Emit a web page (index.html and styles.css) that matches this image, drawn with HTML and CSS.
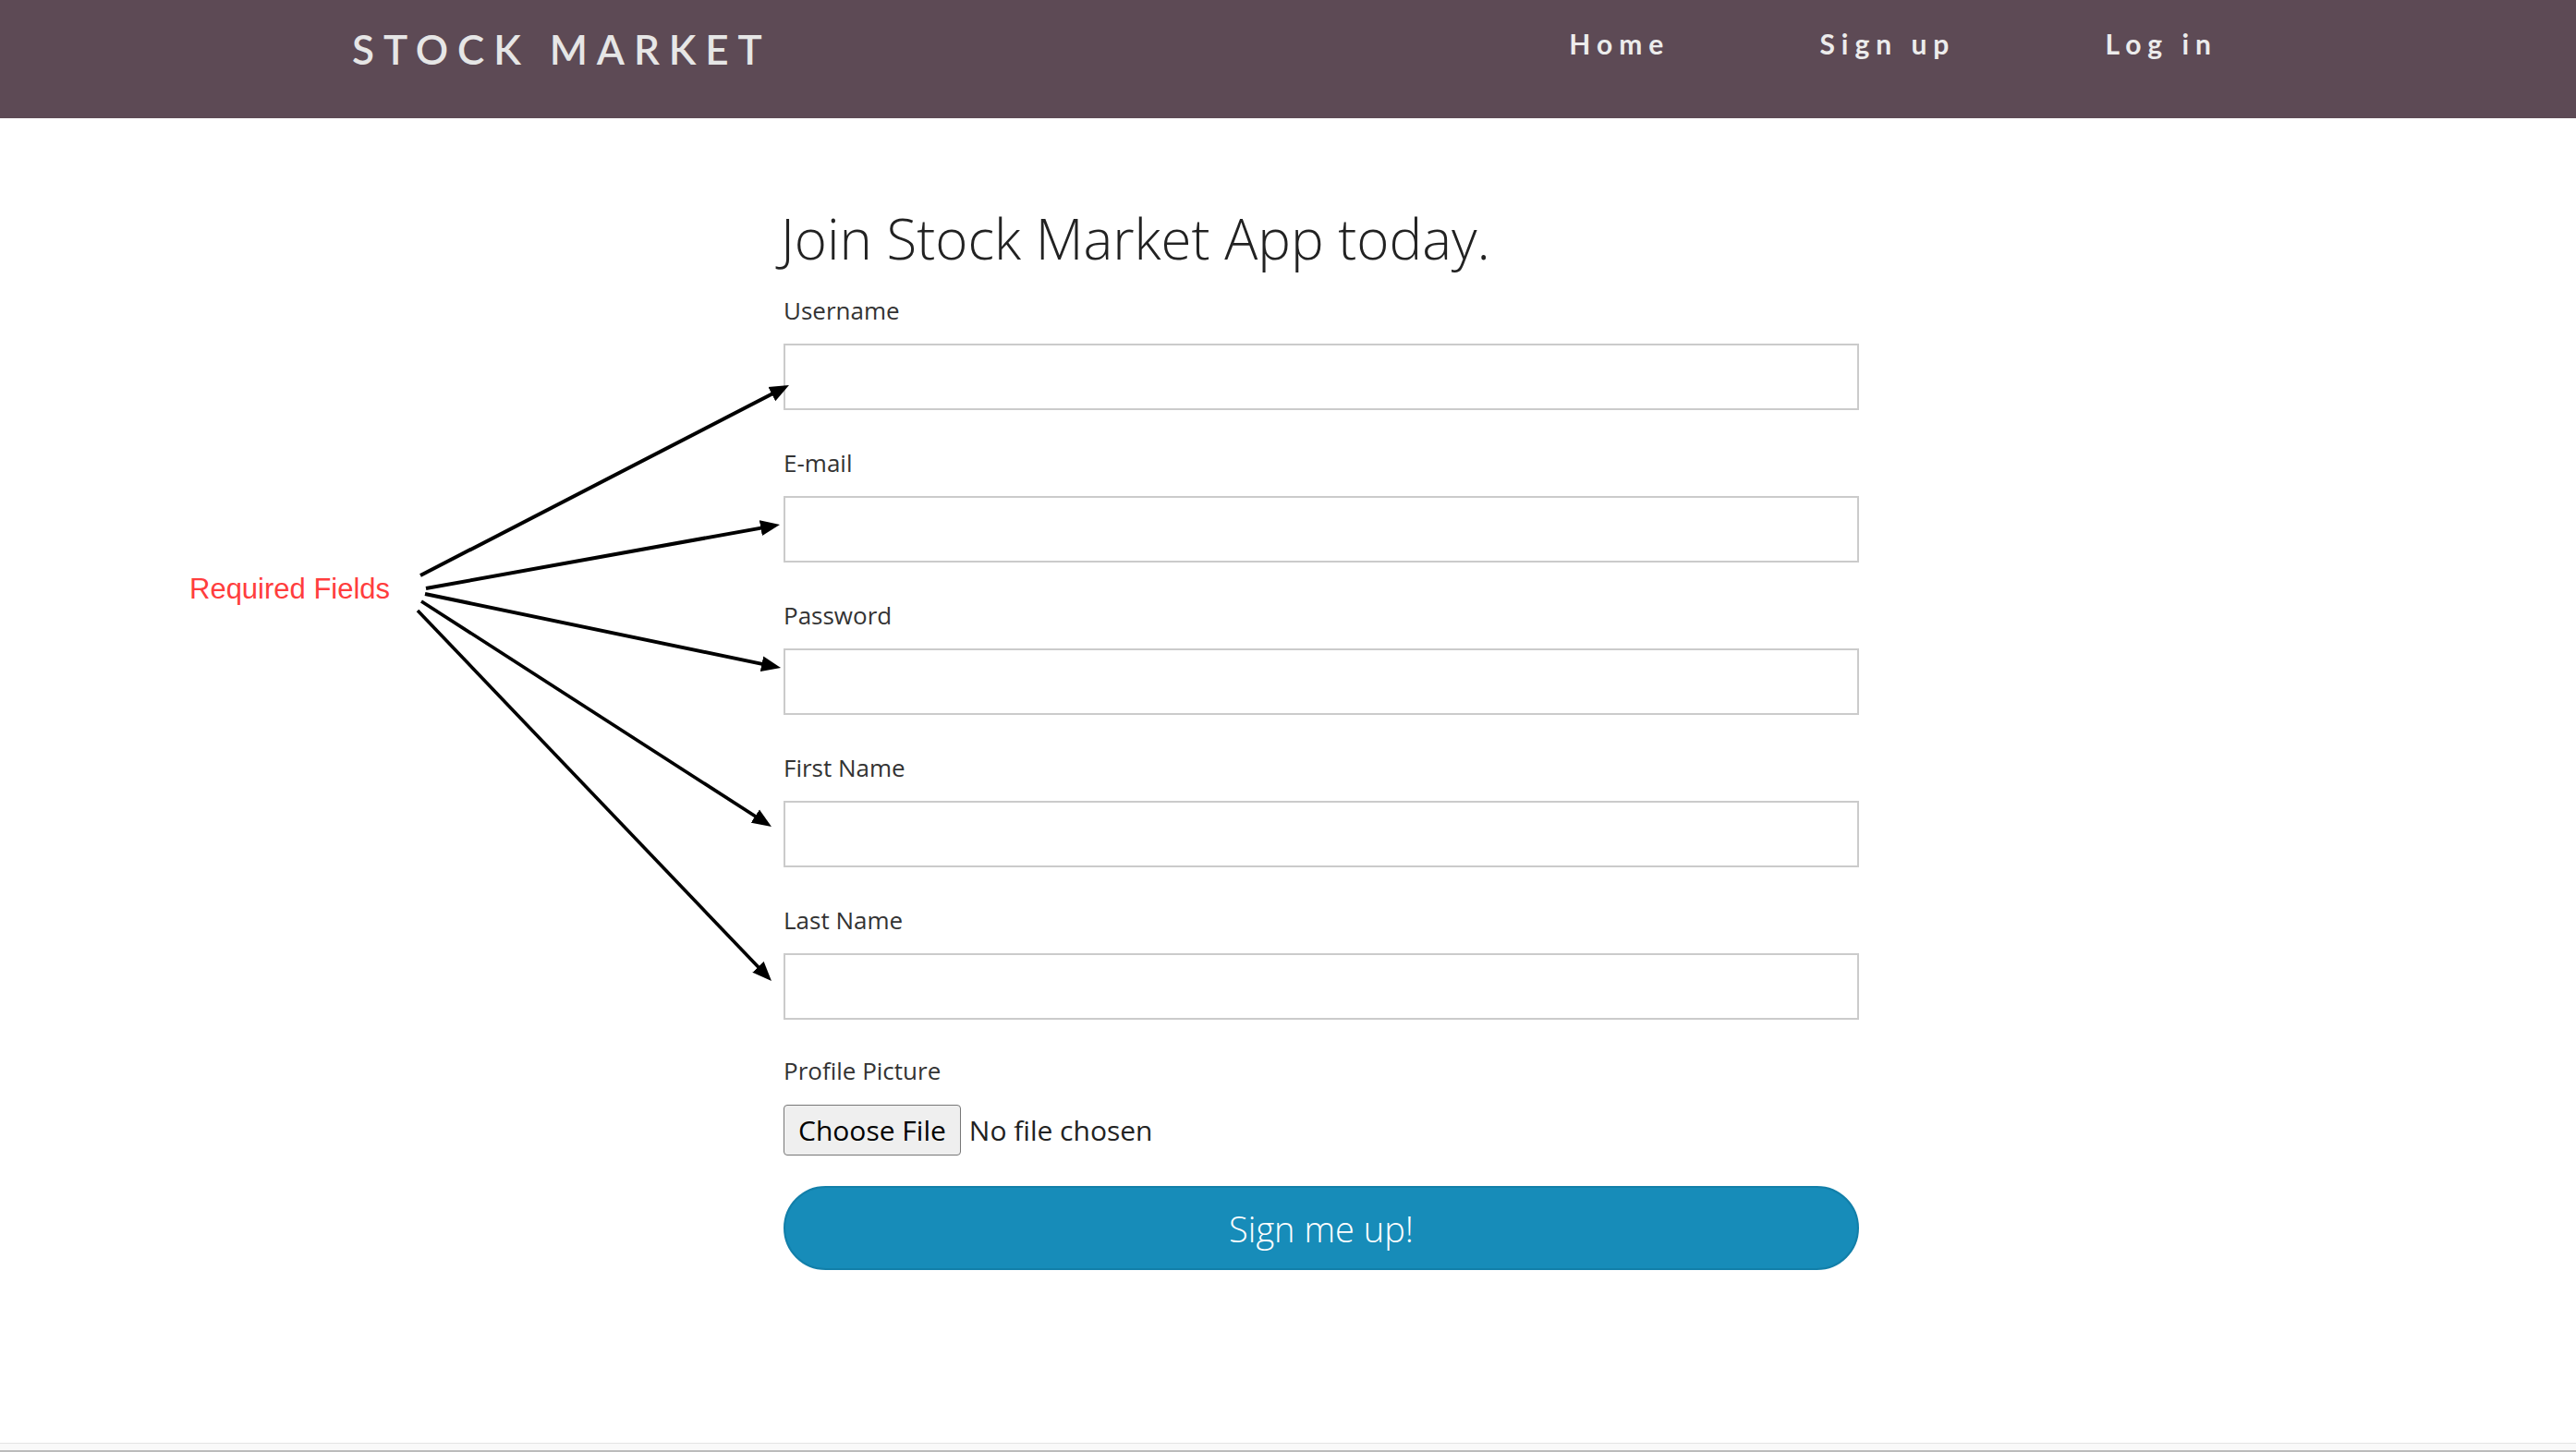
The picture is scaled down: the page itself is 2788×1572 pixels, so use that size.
FILE: index.html
```html
<!DOCTYPE html>
<html lang="en">
<head>
<meta charset="utf-8">
<title>Stock Market - Sign up</title>
<link rel="stylesheet" href="styles.css">
</head>
<body>
<header class="topbar">
  <div class="brand">STOCK MARKET</div>
  <nav class="nav">
    <a class="nav-link" href="#">Home</a>
    <a class="nav-link" href="#">Sign up</a>
    <a class="nav-link" href="#">Log in</a>
  </nav>
</header>

<main class="page">
  <form class="signup">
    <h1 class="title">Join Stock Market App today.</h1>
    <div class="field">
      <label class="label">Username</label>
      <input class="input" type="text">
    </div>
    <div class="field">
      <label class="label">E-mail</label>
      <input class="input" type="text">
    </div>
    <div class="field">
      <label class="label">Password</label>
      <input class="input" type="password">
    </div>
    <div class="field">
      <label class="label">First Name</label>
      <input class="input" type="text">
    </div>
    <div class="field">
      <label class="label">Last Name</label>
      <input class="input" type="text">
    </div>
    <div class="field field-file">
      <label class="label label-file">Profile Picture</label>
      <div class="file-row">
        <button type="button" class="file-btn">Choose File</button>
        <span class="file-none">No file chosen</span>
      </div>
    </div>
    <button type="button" class="submit">Sign me up!</button>
  </form>
</main>

<footer class="bottom-strip"></footer>

<div class="annotation-text">Required Fields</div>
<svg class="annotation" width="2788" height="1572" viewBox="0 0 2788 1572" xmlns="http://www.w3.org/2000/svg">
  <defs>
    <marker id="ah" markerUnits="userSpaceOnUse" markerWidth="22" markerHeight="18" refX="9" refY="9" orient="auto">
      <path d="M0,0.5 L21,9 L0,17.5 z" fill="#000"/>
    </marker>
  </defs>
  <g stroke="#000" stroke-width="4" fill="none" marker-end="url(#ah)">
    <line x1="455" y1="623" x2="843.3" y2="422.5"/>
    <line x1="461" y1="637" x2="832.2" y2="570.1"/>
    <line x1="460" y1="643" x2="833.3" y2="720.6"/>
    <line x1="456" y1="651" x2="824.9" y2="888.5" stroke-width="3.6"/>
    <line x1="452" y1="661" x2="826.7" y2="1053.3" stroke-width="3.6"/>
  </g>
</svg>
</body>
</html>
```

FILE: styles.css
```css
html, body {
  margin: 0;
  padding: 0;
}
body {
  position: relative;
  width: 2788px;
  min-height: 1572px;
  display: flex;
  flex-direction: column;
  background: #fff;
  font-family: "Open Sans", "Noto Sans", sans-serif;
  color: #333;
  overflow: hidden;
}

/* ---------- header ---------- */
.topbar {
  height: 128px;
  background: #5d4a55;
  display: flex;
  align-items: flex-start;
  padding-left: 381px;
  box-sizing: border-box;
}
.brand {
  margin-top: 31px;
  font-family: "Lato", "Noto Sans", sans-serif;
  font-weight: 600;
  font-size: 44px;
  line-height: 44px;
  letter-spacing: 9.9px;
  color: #e6e6e6;
}
.nav {
  margin-left: auto;
  margin-right: 388px;
  margin-top: 32px;
  display: flex;
  gap: 162px;
}
.nav-link {
  font-family: "Lato", "Noto Sans", sans-serif;
  font-weight: 700;
  font-size: 30px;
  line-height: 30px;
  letter-spacing: 7px;
  color: #ececec;
  text-decoration: none;
}

/* ---------- form ---------- */
.page {
  padding: 96px 0 0 848px;
}
.signup {
  width: 1164px;
  display: flex;
  flex-direction: column;
}
.title {
  margin: 0 0 26px -3px;
  font-family: "Open Sans", sans-serif;
  font-weight: 300;
  font-size: 60px;
  line-height: 68px;
  color: #222;
}
.field {
  display: flex;
  flex-direction: column;
  margin-bottom: 39px;
}
.label {
  font-size: 26px;
  line-height: 36px;
  color: #333;
  margin-bottom: 18px;
}
.input {
  display: block;
  box-sizing: border-box;
  width: 1164px;
  height: 72px;
  border: 2px solid #cbcbcb;
  border-radius: 0;
  background: #fff;
  margin: 0;
  padding: 0 12px;
  outline: none;
}
.field-file {
  margin-top: -2px;
  margin-bottom: 33px;
}
.label-file {
  margin-bottom: 19px;
}
.file-row {
  display: flex;
  align-items: center;
}
.file-btn {
  box-sizing: border-box;
  height: 55px;
  padding: 0 15px;
  margin: 0;
  font-family: "Open Sans", sans-serif;
  font-size: 30px;
  line-height: 36px;
  color: #000;
  background: #efefef;
  border: 1.5px solid #777;
  border-radius: 4px;
}
.file-none {
  margin-left: 9px;
  font-size: 30px;
  line-height: 36px;
  color: #222;
}
.submit {
  box-sizing: border-box;
  width: 1164px;
  height: 91px;
  margin: 0;
  padding: 0;
  border: 2px solid #127fa9;
  border-radius: 46px;
  background: #178cb9;
  color: #fff;
  font-family: "Open Sans", sans-serif;
  font-weight: 300;
  font-size: 38px;
  line-height: 52px;
}

/* ---------- bottom strip ---------- */
.bottom-strip {
  margin-top: auto;
  height: 10px;
  box-sizing: border-box;
  background: #f9f9f9;
  border-top: 1px solid #e4e4e4;
  border-bottom: 2px solid #bbb;
}

/* ---------- annotation overlay ---------- */
.annotation-text {
  position: absolute;
  left: 205px;
  top: 620px;
  font-family: "Liberation Sans", Arial, sans-serif;
  font-size: 31px;
  line-height: 36px;
  color: #ff3d3d;
}
.annotation {
  position: absolute;
  left: 0;
  top: 0;
  pointer-events: none;
}
```
